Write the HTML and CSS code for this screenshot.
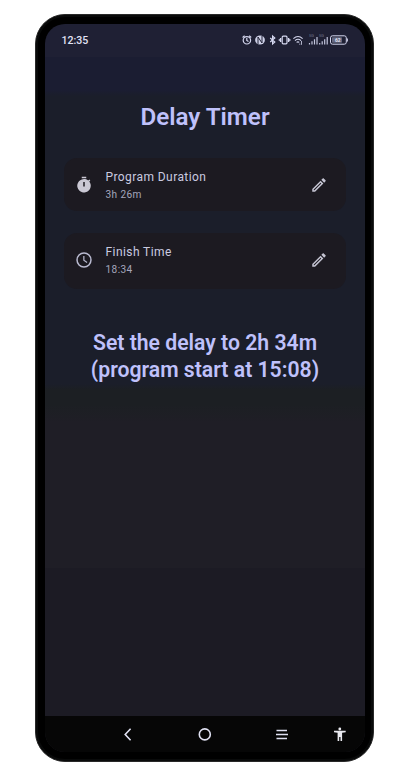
FILE: index.html
```html
<!DOCTYPE html>
<html lang="en">
<head>
<meta charset="utf-8">
<title>Delay Timer</title>
<link rel="stylesheet" href="styles.css">
</head>
<body>
<div class="phone">
  <div class="screen">
    <header class="status">
      <span class="clock">12:35</span>
      <svg class="status-icons" width="107" height="18" viewBox="241 31 107 18">
        <g fill="none" stroke="#d5d7ef" stroke-width="1.2">
          <circle cx="246.9" cy="40.3" r="3.7"/>
          <path d="M246.8 38v2.5l1.7 1M242.6 37.5l2-1.8M251.2 37.5l-2-1.8"/>
          <path d="M270.2 38l4.6 4-2.2 2v-8l2.2 2-4.6 4"/>
          <rect x="282.2" y="36.2" width="4.8" height="7.6" rx="1"/>
          <path d="M280.6 38v4M288.6 38v4M279.4 39.2v1.6M289.8 39.2v1.6" stroke-width="1.4"/>
          <path d="M293.4 38.6q4.6-4.2 9.2 0M295 40.6q3-2.6 6 0M296.6 42.4q1.4-1.2 2.6 0" stroke-width="1.1"/>
          <path d="M301.5 41v3.8M299.8 43.6v1.2" stroke-width=".8"/>
          <rect x="330.5" y="35.8" width="15.8" height="8.4" rx="2" stroke-width="1"/>
        </g>
        <ellipse cx="260" cy="40" rx="4.9" ry="4.5" fill="#cfd1e8"/>
        <path d="M258 44v-7l4 6v-7" fill="none" stroke="#1f2034" stroke-width="1"/>
        <path d="M309.5 44.5V43M312 44.5v-3.3M314.5 44.5v-5.2M317 44.5v-7.5M319.7 44.5V43M322.2 44.5v-3.3M324.7 44.5v-5.2M327.2 44.5v-7.5" stroke="#c4c6de" stroke-width="1.2"/>
        <path d="M347.4 38.4v3.2" stroke="#c4c6de" stroke-width="1.1"/>
        <rect x="332" y="37.3" width="10" height="5.4" rx=".7" fill="#666980"/>
        <text x="335" y="42.3" class="battery-text">62</text>
        <text x="309" y="36.5" class="net-text">5G</text>
        <text x="319" y="36.5" class="net-text">5G</text>
      </svg>
    </header>
    <main class="content">
      <h1>Delay Timer</h1>
      <section class="card">
        <svg class="lead" viewBox="0 0 24 24"><path fill="#cac8d4" fill-rule="evenodd" d="M9 1h6v2H9zM19.03 7.39l1.42-1.42c-.43-.51-.9-.99-1.41-1.41l-1.42 1.42A9 9 0 1 0 19.03 7.39zM11 8h2v6h-2z"/></svg>
        <div class="label"><h2>Program Duration</h2><p>3h 26m</p></div>
        <svg class="edit" viewBox="0 0 24 24"><path fill="#c4c4d2" d="M14.06 9.02l.92.92L5.92 19H5v-.92l9.06-9.06M17.66 3c-.25 0-.51.1-.7.29l-1.83 1.83 3.75 3.75 1.83-1.83c.39-.39.39-1.02 0-1.41l-2.34-2.34c-.2-.2-.45-.29-.71-.29zm-3.6 3.19L3 17.25V21h3.75L17.81 9.94l-3.75-3.75z"/></svg>
      </section>
      <section class="card second">
        <svg class="lead" viewBox="0 0 24 24"><circle cx="12" cy="12" r="9.3" fill="none" stroke="#b9bad0" stroke-width="2"/><path d="M11.8 6.5v5.9l4.3 3" fill="none" stroke="#b9bad0" stroke-width="1.6"/></svg>
        <div class="label"><h2>Finish Time</h2><p>18:34</p></div>
        <svg class="edit" viewBox="0 0 24 24"><path fill="#c4c4d2" d="M14.06 9.02l.92.92L5.92 19H5v-.92l9.06-9.06M17.66 3c-.25 0-.51.1-.7.29l-1.83 1.83 3.75 3.75 1.83-1.83c.39-.39.39-1.02 0-1.41l-2.34-2.34c-.2-.2-.45-.29-.71-.29zm-3.6 3.19L3 17.25V21h3.75L17.81 9.94l-3.75-3.75z"/></svg>
      </section>
      <p class="result">Set the delay to 2h 34m<br>(program start at 15:08)</p>
    </main>
    <nav class="nav">
      <svg width="320" height="36" viewBox="45 716 320 36" fill="none" stroke="#e0e1f2" stroke-width="1.6">
        <path d="M130.6 728.8l-5.4 5.7 5.4 5.7"/>
        <circle cx="204.8" cy="734.4" r="5.5"/>
        <path d="M276.5 730.5h10.5M276 734.5h12M276.5 738.5h10.5"/>
        <g fill="#e8e8ee" stroke="none"><circle cx="339.8" cy="729" r="1.4"/><path d="M334 730.7h11.7v1.5l-3.6.6v8.3h-1.6v-4h-1.3v4h-1.6v-8.3l-3.6-.6z"/></g>
      </svg>
    </nav>
  </div>
</div>
</body>
</html>
```
FILE: styles.css
```css
* { box-sizing: border-box; }
body {
  margin: 0;
  padding: 14px 0 0 35px;
  background: #fff;
  font-family: Roboto, sans-serif;
}
.phone {
  width: 339px;
  height: 748px;
  padding: 9px 9px;
  border: 1px solid #282828;
  border-radius: 30px;
  background: #000;
  box-shadow: inset 0 0 0 2px #090a0a;
}
.screen {
  display: flex;
  flex-direction: column;
  width: 320px;
  height: 728px;
  overflow: hidden;
  border-radius: 20px;
  background: linear-gradient(#1f2034 0 33px, #1b1d32 33px 66px, #1b1e2a 72px 360px, #1c1f23 366px 380px, #1f1e26 398px 544px, #1c1b24 544px);
}
.status {
  display: flex;
  align-items: flex-start;
  justify-content: space-between;
  height: 33px;
  padding: 7px 17px 0 16.5px;
}
.clock {
  color: #e1e2f5;
  font-size: 10.6px;
  font-weight: 500;
  line-height: 19px;
}
.battery-text { fill: #e4e5f5; font-size: 5px; font-weight: 700; }
.net-text { fill: #74768c; font-size: 4px; }
.content {
  flex: 1;
  padding: 44px 19px 0;
}
h1 {
  margin: 0;
  color: #bfc1fb;
  font-size: 24.2px;
  font-weight: 600;
  line-height: 32px;
  text-align: center;
}
.card {
  display: flex;
  align-items: center;
  width: 282px;
  height: 53px;
  margin-top: 25px;
  padding: 0 18px 0 11px;
  border-radius: 13px;
  background: #1c1a21;
}
.card.second { height: 56px; margin-top: 22px; padding-bottom: 2px; }
.lead { width: 18px; height: 18px; }
.label { flex: 1; margin-left: 12.5px; padding-top: 1px; }
h2, .label p { margin: 0; font-weight: 400; }
h2 { color: #cacbe0; font-size: 12px; line-height: 18px; letter-spacing: .42px; }
.label p { color: #a5a6bc; font-size: 10.1px; line-height: 17px; letter-spacing: .4px; }
.edit { width: 18px; height: 18px; }
.result {
  margin: 40px 0 0;
  color: #bfc1fb;
  font-size: 21.2px;
  font-weight: 600;
  line-height: 27px;
  text-align: center;
}
.nav { height: 36px; background: #060606; }
.nav svg { display: block; }
```
